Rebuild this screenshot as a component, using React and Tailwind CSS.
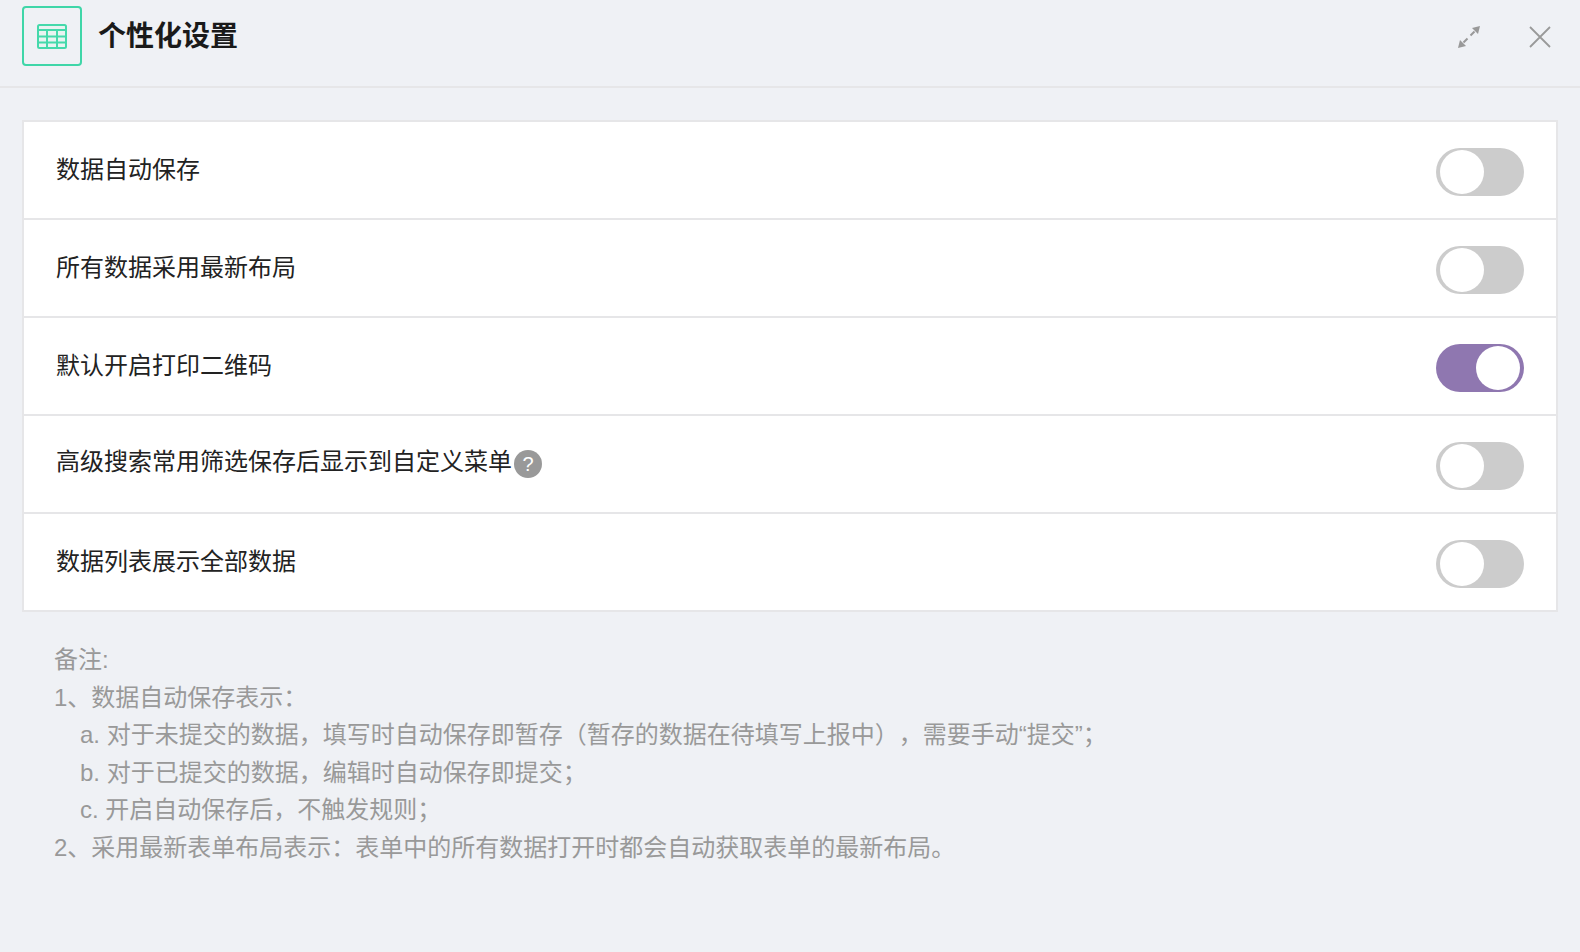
const FONT = "font-['Liberation_Sans','Noto_Sans_CJK_SC',sans-serif]";

function Toggle({ on }) {
  return (
    <div className={`mt-1 flex h-12 w-[88px] shrink-0 items-center rounded-full px-1 ${on ? "justify-end bg-[#8f77b0]" : "justify-start bg-[#cccccc]"}`}>
      <div className="h-11 w-11 rounded-full bg-white" />
    </div>
  );
}

function Row({ label, on, help, last }) {
  return (
    <div className={`flex items-center justify-between pl-[32px] pr-[32px] ${last ? "h-[96px]" : "h-[98px] border-b-2 border-[#e6e6e8]"}`}>
      <div className={`flex items-center text-[24px] leading-[36px] text-[#222222] ${help ? "mb-[4px]" : ""}`}>
        <span>{label}</span>
        {help && (
          <span className="ml-[2px] mt-[3px] flex h-7 w-7 items-center justify-center rounded-full bg-[#999999] text-[20px] leading-none text-white">?</span>
        )}
      </div>
      <Toggle on={on} />
    </div>
  );
}

const rows = [
  { label: "数据自动保存" },
  { label: "所有数据采用最新布局" },
  { label: "默认开启打印二维码", on: true },
  { label: "高级搜索常用筛选保存后显示到自定义菜单", help: true },
  { label: "数据列表展示全部数据", last: true },
];

export default function App() {
  return (
    <div className={`${FONT} h-[952px] w-[1580px] overflow-hidden bg-[#eff1f5]`}>
      <header className="flex h-[88px] items-start justify-between border-b-2 border-[#e6e6e8] pl-[22px] pr-[29px] pt-[6px]">
        <div className="flex items-start">
          <div className="flex h-[60px] w-[60px] items-center justify-center rounded-[4px] border-2 border-[#3fd6a8]">
            <svg width="30" height="25" viewBox="0 0 30 25">
              <rect x="1" y="1" width="28" height="23" rx="1.5" fill="#e9f3f1" stroke="#45d9ab" strokeWidth="2" />
              <path d="M1 6 H29 M1 12.5 H29 M1 18.5 H29 M10 6 V24 M20 6 V24" fill="none" stroke="#45d9ab" strokeWidth="2" />
            </svg>
          </div>
          <h1 className="ml-[16px] mt-[11px] text-[28px] font-bold leading-[40px] text-[#1a1a1a]">个性化设置</h1>
        </div>
        <div className="mt-[20px] flex items-center gap-[47px]">
          <svg width="22" height="22" viewBox="0 0 22 22" fill="none" className="mr-[2px]">
            <path d="M22 0 L14 2 L20 8 Z" fill="#999999" />
            <path d="M0 22 L2 14 L8 20 Z" fill="#999999" />
            <path d="M16.5 5.5 L12.5 9.5 M9.5 12.5 L5.5 16.5" stroke="#999999" strokeWidth="2" />
          </svg>
          <svg width="22" height="22" viewBox="0 0 22 22" fill="none">
            <path d="M1 1 L21 21 M21 1 L1 21" stroke="#999999" strokeWidth="1.8" />
          </svg>
        </div>
      </header>

      <main className="px-[22px] pt-[32px]">
        <section className="border-2 border-[#e6e6e8] bg-white">
          {rows.map((r) => (
            <Row key={r.label} {...r} />
          ))}
        </section>

        <div className="pl-[32px] pt-[29px] text-[24px] leading-[37.5px] text-[#999999] [text-spacing-trim:space-all]">
          <p>备注:</p>
          <p>1、数据自动保存表示：</p>
          <p className="pl-[26px]">a. 对于未提交的数据，填写时自动保存即暂存（暂存的数据在待填写上报中），需要手动“提交”；</p>
          <p className="pl-[26px]">b. 对于已提交的数据，编辑时自动保存即提交；</p>
          <p className="pl-[26px]">c. 开启自动保存后，不触发规则；</p>
          <p>2、采用最新表单布局表示：表单中的所有数据打开时都会自动获取表单的最新布局。</p>
        </div>
      </main>
    </div>
  );
}
